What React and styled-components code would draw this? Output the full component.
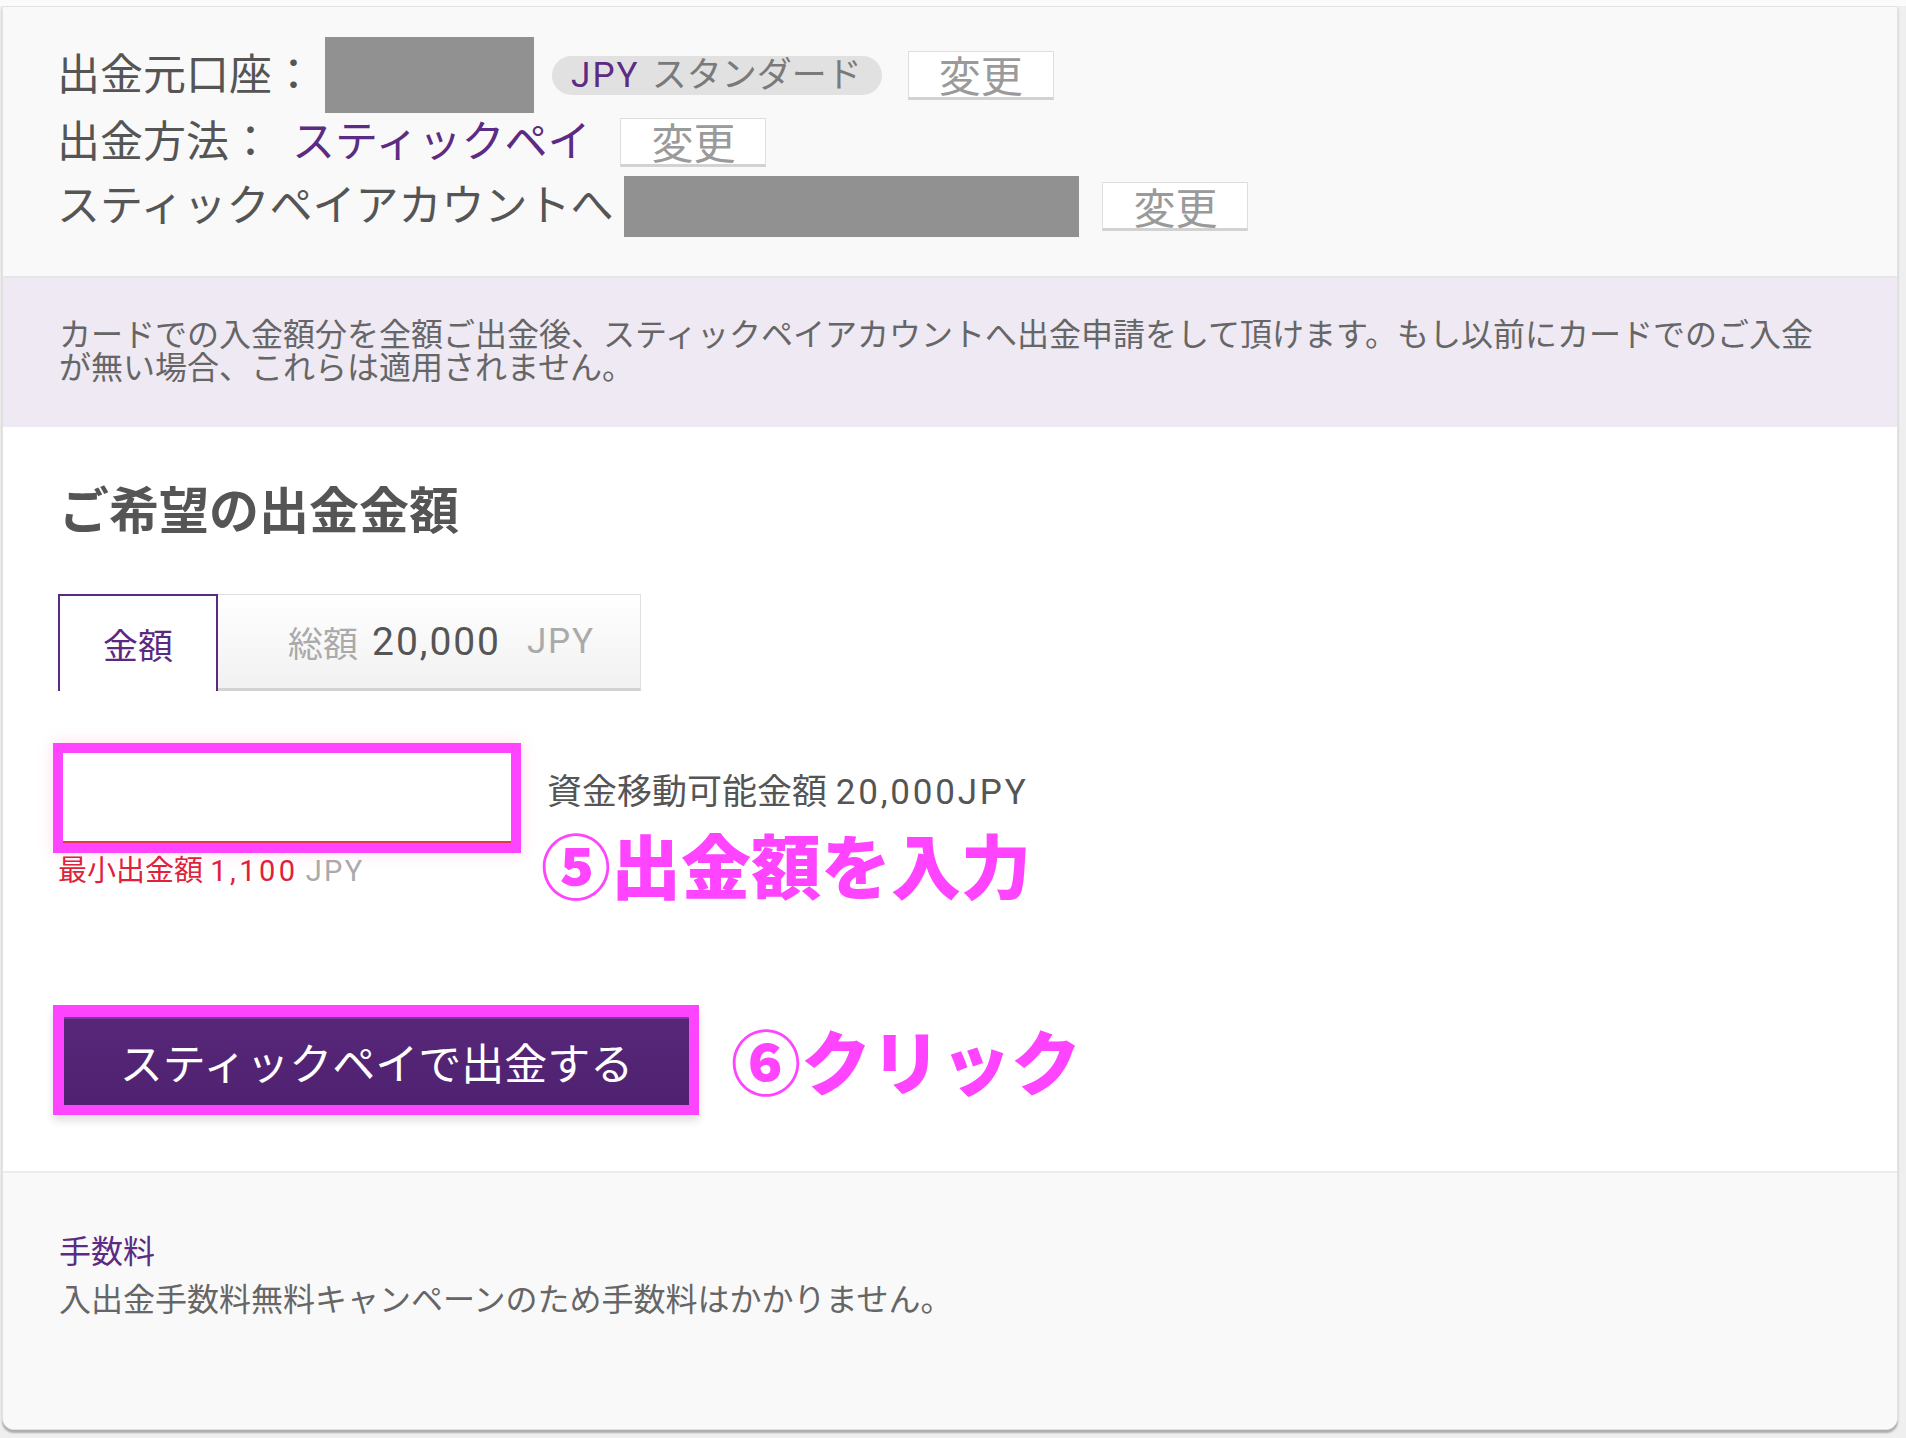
import React from "react";
import styled, { createGlobalStyle } from "styled-components";

const GlobalStyle = createGlobalStyle`
  html, body {
    margin: 0;
    padding: 0;
    background: #efefef;
    height: 1438px;
    overflow: hidden;
  }
  body {
    font-family: Roboto, "Noto Sans CJK JP", sans-serif;
    color: #555;
  }
`;

const Page = styled.div`
  position: relative;
  padding: 6px 8px 0 2px;
  background: linear-gradient(#fbfbfb 0 6px, #efefef 6px);
`;

const Card = styled.div`
  background: #fff;
  border: 1px solid #e2e2e2;
  border-radius: 0 0 12px 12px;
  box-shadow: 0 3px 2px rgba(0, 0, 0, 0.28);
  overflow: hidden;
`;

/* latin runs are tracked a little wider, like the original Hiragino latin */
const Latin = styled.span`
  letter-spacing: ${(p) => p.$ls || 0.07}em;
  color: ${(p) => p.$color || "inherit"};
`;

const AccountSection = styled.div`
  background: #f9f9f9;
  padding: 30px 0 34px 54px;
  border-bottom: 2px solid #e6e6e6;
  display: flex;
  flex-direction: column;
`;

const Row = styled.div`
  display: flex;
  align-items: center;
  height: ${(p) => p.$h}px;
  font-size: 43px;
  line-height: 1;
  color: #555;
  white-space: nowrap;
`;

const Masked = styled.div`
  width: ${(p) => p.$w}px;
  height: ${(p) => p.$h}px;
  background: #919191;
  margin-left: ${(p) => p.$ml || 0}px;
`;

const Pill = styled.div`
  margin-left: 18px;
  height: 39px;
  padding: 0 20px 0 19px;
  border-radius: 20px;
  background: #e1e1e1;
  display: flex;
  align-items: center;
  gap: 12px;
  font-size: 35px;
  color: #7a7a7a;
`;

const ChangeButton = styled.button`
  margin-left: ${(p) => p.$ml}px;
  width: 146px;
  height: 49px;
  padding: 0;
  border: 1px solid #dedede;
  border-bottom: 3px solid #d2d2d2;
  background: #fff;
  color: #9a9a9a;
  font-family: "Noto Sans CJK JP", sans-serif;
  font-size: 42px;
  line-height: 1;
  display: flex;
  align-items: center;
  justify-content: center;
`;

const Method = styled.span`
  color: #5c2b84;
  margin-left: 20px;
`;

const Notice = styled.div`
  background: #eee9f3;
  padding: 41px 0 42px 56px;
  p {
    margin: 0;
    max-width: 1778px;
    font-size: 32px;
    line-height: 33px;
    color: #666;
  }
`;

const AmountSection = styled.div`
  padding: 55px 0 56px 53px;
  display: flex;
  flex-direction: column;
`;

const Heading = styled.h2`
  margin: 0 0 0 3px;
  font-size: 50px;
  font-weight: 700;
  line-height: 60px;
  color: #555;
`;

const Tabs = styled.div`
  display: flex;
  margin-top: 52px;
  height: 97px;
`;

const Tab = styled.div`
  box-sizing: border-box;
  height: 97px;
  display: flex;
  align-items: center;
  font-size: 35px;
  white-space: nowrap;
  ${(p) =>
    p.$active
      ? `
    width: 160px;
    margin-left: 2px;
    justify-content: center;
    border: 2px solid #5a2a82;
    border-bottom: none;
    background: #fff;
    color: #5a2a82;
  `
      : `
    width: 423px;
    padding-left: 70px;
    border: 1px solid #e0e0e0;
    border-left: none;
    border-bottom: 3px solid #d3d3d3;
    background: linear-gradient(#ffffff, #f1f1f1);
    color: #aaa;
  `}
`;

const Total = styled(Latin)`
  margin: 0 26px 0 14px;
  font-size: 39px;
  color: #555;
`;

const InputRow = styled.div`
  display: flex;
  gap: 26px;
  margin-top: 52px;
`;

const InputColumn = styled.div`
  display: flex;
  flex-direction: column;
`;

const HighlightInput = styled.div`
  box-sizing: border-box;
  width: 468px;
  height: 110px;
  margin-left: -3px;
  border: 10px solid #ff44ff;
  box-shadow: 0 0 14px rgba(255, 120, 180, 0.25);
  background: #fff;
  display: flex;
  input {
    flex: 1;
    border: none;
    border-bottom: 2px solid #e8364e;
    outline: none;
    background: #fff;
  }
`;

const MinAmount = styled.div`
  margin: 0 0 0 2px;
  font-size: 29px;
  line-height: 36px;
  color: #e0213c;
`;

const InfoColumn = styled.div`
  display: flex;
  flex-direction: column;
  padding-top: 30px;
`;

const Available = styled.div`
  font-size: 35px;
  line-height: 40px;
  color: #555;
  white-space: nowrap;
`;

const Annotation = styled.div`
  margin: ${(p) => p.$m || "0"};
  font-family: "Noto Sans CJK JP", sans-serif;
  font-size: ${(p) => p.$size}px;
  font-weight: 900;
  line-height: 1.45;
  color: #ff44ff;
  white-space: nowrap;
  text-shadow: 0 0 2px #fff, 0 0 1px #fff;
`;

const ButtonRow = styled.div`
  display: flex;
  align-items: center;
  gap: 32px;
  margin-top: 90px;
`;

const SubmitFrame = styled.div`
  box-sizing: border-box;
  width: 646px;
  height: 110px;
  margin-left: -3px;
  padding: 12px 10px 10px 11px;
  background: #ff44ff;
  box-shadow: 0 6px 8px rgba(0, 0, 0, 0.12);
  display: flex;
`;

const SubmitButton = styled.button`
  flex: 1;
  border: none;
  border-top: 2px solid #7a3a9e;
  background: linear-gradient(#572679, #4f2270);
  color: #fff;
  font-family: "Noto Sans CJK JP", sans-serif;
  font-size: 43px;
  line-height: 1;
  padding: 0;
`;

const FeeSection = styled.div`
  background: #f9f9f9;
  border-top: 2px solid #ececec;
  height: 258px;
  box-sizing: border-box;
  padding: 57px 0 0 56px;
  h3 {
    margin: 0;
    font-size: 32px;
    font-weight: 400;
    line-height: 44px;
    color: #5c2b84;
  }
  p {
    margin: 4px 0 0;
    font-size: 32px;
    line-height: 44px;
    color: #666;
  }
`;

const Footer = styled.div`
  margin: 4px 0 0 0;
  font-family: "Liberation Sans", sans-serif;
  font-size: 28px;
  line-height: 30px;
  color: #d6d6d6;
  white-space: nowrap;
  overflow: hidden;
`;

export default function App() {
  return (
    <>
      <GlobalStyle />
      <Page>
        <Card>
          <AccountSection>
            <Row $h={76}>
              出金元口座：
              <Masked $w={209} $h={76} $ml={10} />
              <Pill>
                <Latin $ls={0.06} $color="#5c2b84">
                  JPY
                </Latin>
                スタンダード
              </Pill>
              <ChangeButton $ml={26}>変更</ChangeButton>
            </Row>
            <Row $h={58}>
              出金方法：<Method>スティックペイ</Method>
              <ChangeButton $ml={30}>変更</ChangeButton>
            </Row>
            <Row $h={71}>
              スティックペイアカウントへ
              <Masked $w={455} $h={61} $ml={11} />
              <ChangeButton $ml={23}>変更</ChangeButton>
            </Row>
          </AccountSection>

          <Notice>
            <p>
              カードでの入金額分を全額ご出金後、スティックペイアカウントへ出金申請をして頂けます。もし以前にカードでのご入金が無い場合、これらは適用されません。
            </p>
          </Notice>

          <AmountSection>
            <Heading>ご希望の出金金額</Heading>
            <Tabs>
              <Tab $active>金額</Tab>
              <Tab>
                総額<Total $ls={0.05}>20,000</Total>
                <Latin $ls={0.05}>JPY</Latin>
              </Tab>
            </Tabs>
            <InputRow>
              <InputColumn>
                <HighlightInput>
                  <input type="text" />
                </HighlightInput>
                <MinAmount>
                  最小出金額 <Latin $ls={0.12}>1,100</Latin>{" "}
                  <Latin $ls={0.08} $color="#aaa">
                    JPY
                  </Latin>
                </MinAmount>
              </InputColumn>
              <InfoColumn>
                <Available>
                  資金移動可能金額 <Latin $ls={0.08}>20,000JPY</Latin>
                </Available>
                <Annotation $size={70} $m="0 0 0 -6px">
                  ⑤出金額を入力
                </Annotation>
              </InfoColumn>
            </InputRow>
            <ButtonRow>
              <SubmitFrame>
                <SubmitButton>スティックペイで出金する</SubmitButton>
              </SubmitFrame>
              <Annotation $size={70}>⑥クリック</Annotation>
            </ButtonRow>
          </AmountSection>

          <FeeSection>
            <h3>手数料</h3>
            <p>入出金手数料無料キャンペーンのため手数料はかかりません。</p>
          </FeeSection>
        </Card>
        <Footer>
          , Harpenden, Herts, England, AL5 3RW. London (operates the website) and Axiory Global Limited, registration number 177
        </Footer>
      </Page>
    </>
  );
}
